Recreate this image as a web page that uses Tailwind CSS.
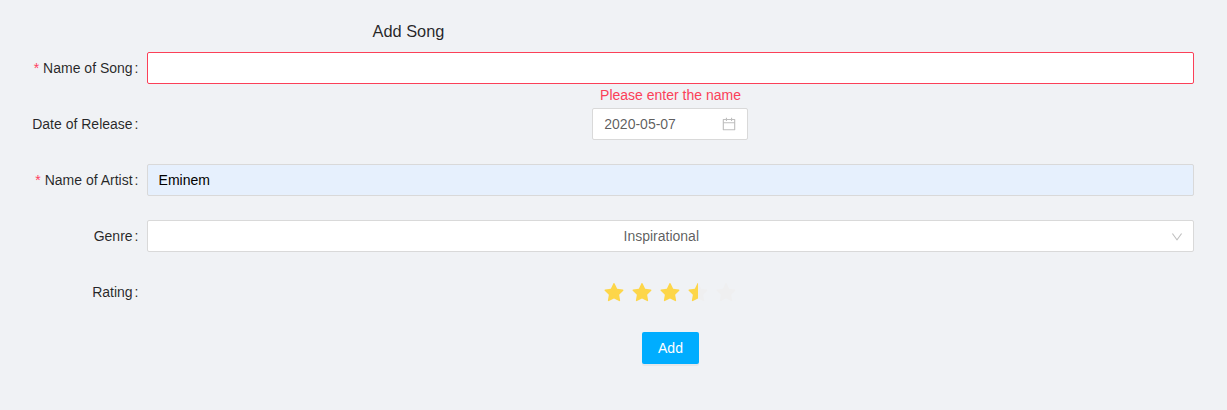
<!DOCTYPE html>
<html lang="en">
<head>
<meta charset="utf-8">
<title>Add Song</title>
<script src="https://cdn.jsdelivr.net/npm/@tailwindcss/browser@4"></script>
</head>
<body class="h-[410px] overflow-hidden bg-[#f0f2f5] pt-5 pr-[33px] font-['Liberation_Sans',Arial,sans-serif] text-sm leading-[21px] text-black/85">
<svg class="hidden">
  <symbol id="star" viewBox="64 64 896 896"><path d="M908.1 353.1l-253.9-36.9L540.7 86.1c-3.1-6.3-8.2-11.4-14.5-14.5-15.8-7.8-35-1.3-42.9 14.5L369.8 316.2l-253.9 36.9c-7 1-13.4 4.3-18.3 9.3a32.05 32.05 0 0 0 .6 45.3l183.7 179.1-43.4 252.9a31.95 31.95 0 0 0 46.4 33.7L512 754l227.1 119.4c6.2 3.3 13.4 4.4 20.3 3.2 17.4-3 29.1-19.5 26.1-36.9l-43.4-252.9 183.7-179.1c5-4.9 8.3-11.3 9.3-18.3 2.7-17.5-9.5-33.7-27-36.3z"/></symbol>
</svg>
<h1 class="ml-[372.5px] h-8 text-[16.38px] leading-[23px] font-normal">Add Song</h1>
<form>
  <div class="flex h-14">
    <label class="flex h-8 w-[147px] shrink-0 items-center justify-end pr-[8.5px]"><span class="mr-1 text-[#ff4060]">*</span>Name of Song<span class="ml-0.5">:</span></label>
    <div class="flex-1 text-center">
      <div class="h-8 rounded-xs border border-[#fb4058] bg-white"></div>
      <p class="leading-[23px] text-[#fb4058]">Please enter the name</p>
    </div>
  </div>
  <div class="flex h-14">
    <label class="flex h-8 w-[147px] shrink-0 items-center justify-end pr-[8.5px]">Date of Release<span class="ml-0.5">:</span></label>
    <div class="flex flex-1 justify-center">
      <div class="mr-px flex h-8 w-[156px] items-center justify-between rounded-xs border border-[#d9d9d9] bg-white px-[11px] text-black/65"><span class="pl-[0.3px]">2020-05-07</span>
        <svg class="size-3.5" viewBox="64 64 896 896" fill="#bfbfbf"><path d="M880 184H712v-64c0-4.4-3.6-8-8-8h-56c-4.4 0-8 3.6-8 8v64H384v-64c0-4.4-3.6-8-8-8h-56c-4.4 0-8 3.6-8 8v64H144c-17.7 0-32 14.3-32 32v664c0 17.7 14.3 32 32 32h736c17.7 0 32-14.3 32-32V216c0-17.7-14.3-32-32-32zm-40 656H184V460h656v380zM184 392V256h128v48c0 4.4 3.6 8 8 8h56c4.4 0 8-3.6 8-8v-48h256v48c0 4.4 3.6 8 8 8h56c4.4 0 8-3.6 8-8v-48h128v136H184z"/></svg>
      </div>
    </div>
  </div>
  <div class="flex h-14">
    <label class="flex h-8 w-[147px] shrink-0 items-center justify-end pr-[8.5px]"><span class="mr-1 text-[#ff4060]">*</span>Name of Artist<span class="ml-0.5">:</span></label>
    <div class="flex h-8 flex-1 items-center rounded-xs border border-[#d9d9d9] bg-[#e6f0fd] pl-[10.6px] text-black">Eminem</div>
  </div>
  <div class="flex h-14">
    <label class="flex h-8 w-[147px] shrink-0 items-center justify-end pr-[8.5px]">Genre<span class="ml-0.5">:</span></label>
    <div class="flex h-8 flex-1 items-center rounded-xs border border-[#d9d9d9] bg-white pr-2.5 pl-[11px] text-black/65"><span class="flex-1 pr-[7.5px] text-center">Inspirational</span>
      <svg class="mt-0.5 size-3" viewBox="64 64 896 896" fill="#bfbfbf"><path d="M884 256h-75c-5.1 0-9.9 2.5-12.9 6.6L512 654.2 227.9 262.6c-3-4.1-7.8-6.6-12.9-6.6h-75c-6.5 0-10.3 7.4-6.5 12.7l352.6 486.1c12.8 17.6 39 17.6 51.7 0l352.6-486.1c3.9-5.3.1-12.7-6.4-12.7z"/></svg>
    </div>
  </div>
  <div class="flex h-14">
    <label class="flex h-8 w-[147px] shrink-0 items-center justify-end pr-[8.5px]">Rating<span class="ml-0.5">:</span></label>
    <div class="flex h-8 flex-1 items-center justify-center gap-2 pt-0.5 pr-px">
      <svg class="size-5 fill-[#fdd649]"><use href="#star"/></svg>
      <svg class="size-5 fill-[#fdd649]"><use href="#star"/></svg>
      <svg class="size-5 fill-[#fdd649]"><use href="#star"/></svg>
      <div class="grid size-5">
        <svg class="col-start-1 row-start-1 size-5 fill-[#efeff0]"><use href="#star"/></svg>
        <svg class="col-start-1 row-start-1 size-5 fill-[#fdd649] [clip-path:inset(0_50%_0_0)]"><use href="#star"/></svg>
      </div>
      <svg class="size-5 fill-[#efeff0]"><use href="#star"/></svg>
    </div>
  </div>
  <div class="ml-[147px] flex justify-center">
    <button type="button" class="h-8 w-[57px] rounded-xs bg-[#00adff] text-white shadow-[0_2px_0_rgba(0,0,0,0.045)]">Add</button>
  </div>
</form>
</body>
</html>
